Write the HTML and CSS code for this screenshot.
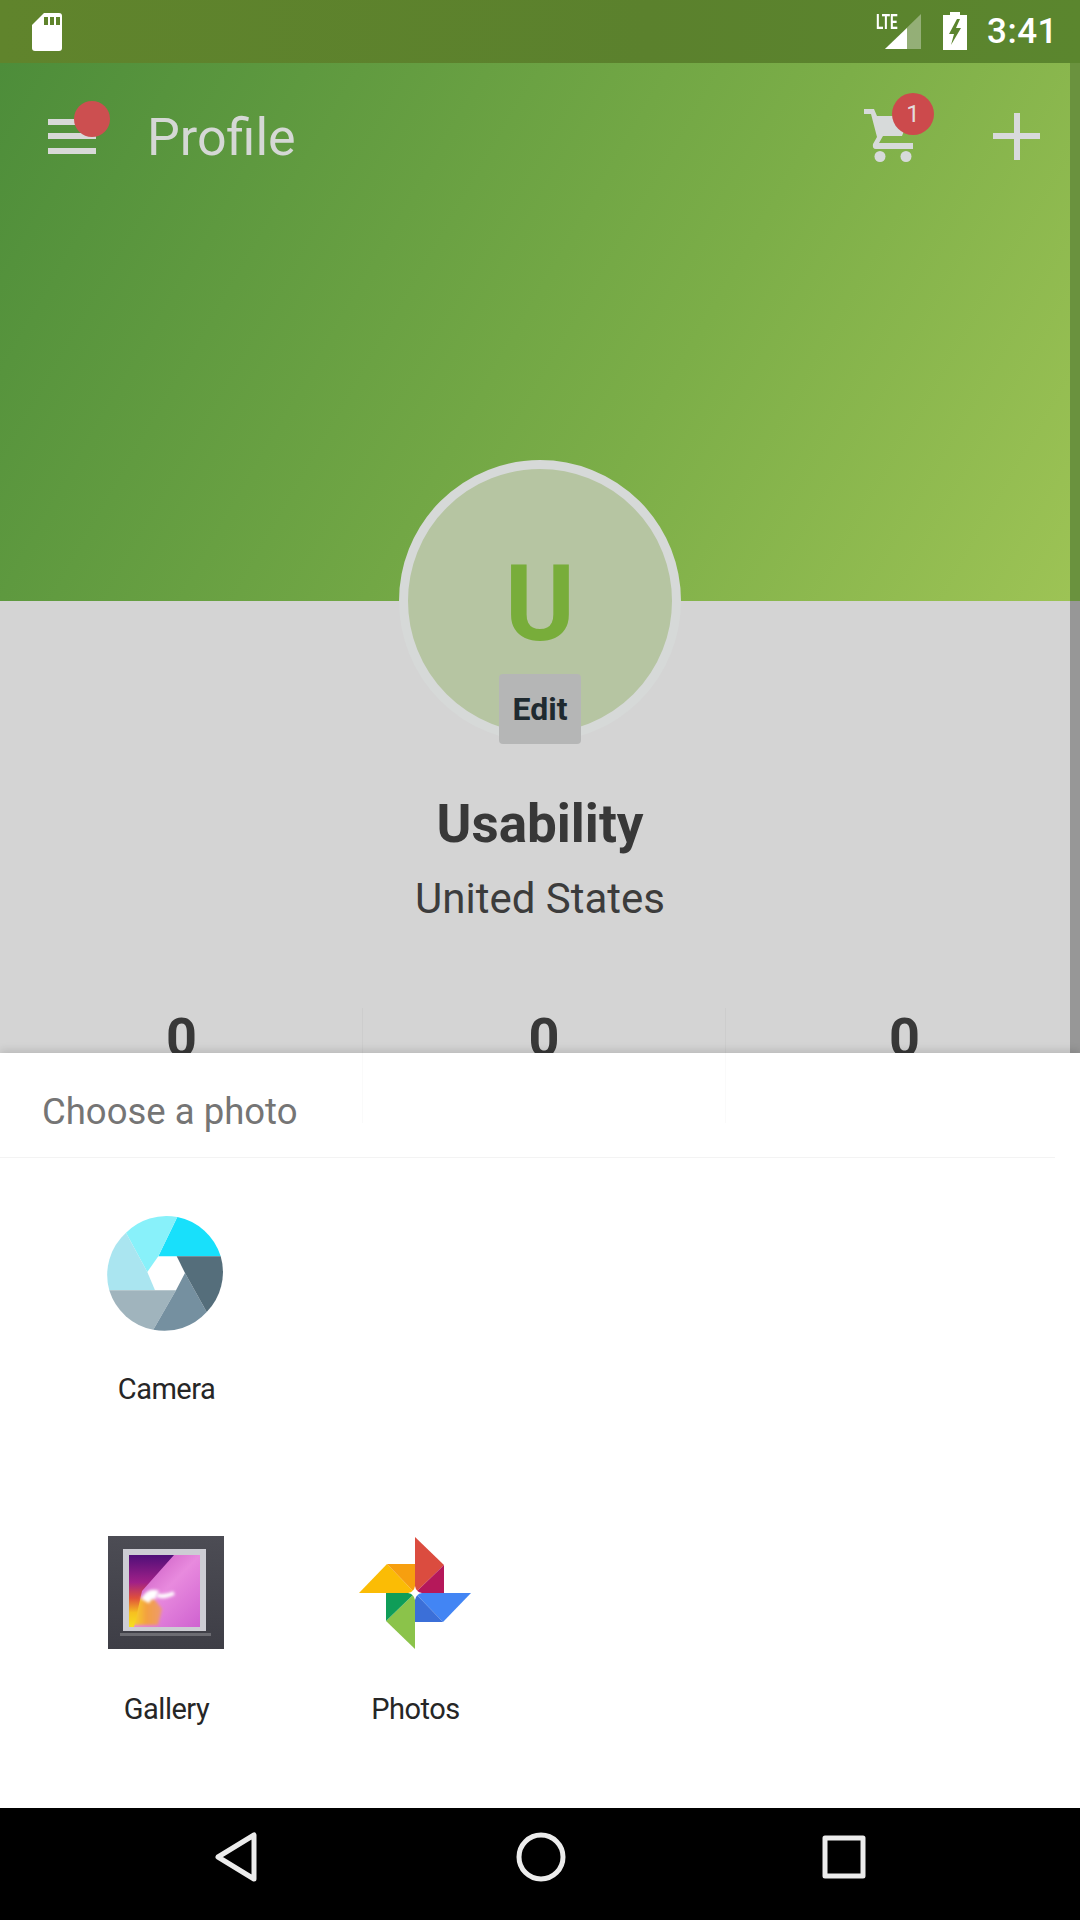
FILE: index.html
```html
<!DOCTYPE html>
<html lang="en">
<head>
  <meta charset="UTF-8" />
  <title>Profile</title>
  <link rel="stylesheet" href="styles.css">
</head>
<body>

  <div class="status-bar">
    <svg class="sd-icon" width="30" height="38" viewBox="0 0 30 38">
      <path fill="#fff" d="M12 0H27a3 3 0 0 1 3 3V35a3 3 0 0 1-3 3H3a3 3 0 0 1-3-3V12Z"/>
      <path fill="#5f832c" d="M12 4h4v8h-4zM18 4h4v8h-4zM24 4h4v8h-4z"/>
    </svg>
    <div class="status-right">
      <div class="signal">
        <span class="lte">LTE</span>
        <svg width="36" height="35" viewBox="0 0 36 35">
          <path fill="#fff" fill-opacity="0.35" d="M36 0V35H0Z"/>
          <path fill="#fff" d="M22 14V35H0Z"/>
        </svg>
      </div>
      <svg class="battery" width="24" height="38" viewBox="0 0 24 38">
        <path fill="#fff" d="M7 0H17V3H24V38H0V3H7Z"/>
        <path fill="#5b842e" d="M14 7 6 22H11L8 33 18 16H13L17 7Z"/>
      </svg>
      <span class="clock">3:41</span>
    </div>
  </div>

  <header class="hero">
    <div class="app-bar">
      <button class="menu-btn">
        <span></span><span></span><span></span>
        <i class="menu-dot"></i>
      </button>
      <h1>Profile</h1>
      <div class="cart">
        <svg width="50" height="54" viewBox="0 0 50 54">
          <path fill="#d7dada" d="M0 0H10L13 7H46L38 27H19L15 34H49V40H12Q8 40 9 35L13 28 7 5H0Z"/>
          <circle fill="#d7dada" cx="16" cy="47.5" r="5.5"/>
          <circle fill="#d7dada" cx="42" cy="47.5" r="5.5"/>
        </svg>
        <span class="cart-badge">1</span>
      </div>
      <div class="plus"></div>
    </div>
    <div class="avatar">
      <span class="avatar-letter">U</span>
      <button class="edit-btn">Edit</button>
    </div>
  </header>

  <section class="profile">
    <h2>Usability</h2>
    <p class="country">United States</p>
    <div class="stats">
      <div class="stat">0</div>
      <div class="stat">0</div>
      <div class="stat">0</div>
    </div>
  </section>

  <section class="sheet">
    <div class="sheet-title">Choose a photo</div>
    <div class="app-grid">
      <div class="app">
        <svg class="app-icon" viewBox="-57 -58 116 116">
          <path fill="#18e0fb" d="M11.3-56A57 57 0 0 1 54.7-16.7L-7.7-16.7Z"/>
          <path fill="#88f1fa" d="M-40-40.3A57 57 0 0 1 11.3-56L-7.7-16.7-18.7-1Z"/>
          <path fill="#aae5f0" d="M-56.7 17.3A57 57 0 0 1-40-40.3L-18.7-1-11 17.3Z"/>
          <path fill="#a0b4bd" d="M-12.7 56.7A57 57 0 0 1-56.7 17.3L10 17.3Z"/>
          <path fill="#7590a0" d="M40.7 39A57 57 0 0 1-12.7 56.7L10 17.3 19 0Z"/>
          <path fill="#556e7b" d="M54.7-16.7A57 57 0 0 1 40.7 39L19 0 10.7-16.7Z"/>
        </svg>
        <span>Camera</span>
      </div>
      <div class="app"></div>
      <div class="app"></div>
      <div class="app"></div>
      <div class="app">
        <svg class="app-icon" viewBox="1 0 116 116">
          <defs>
            <linearGradient id="frameFill" x1="0" y1="0" x2="0" y2="1">
              <stop offset="0" stop-color="#4c4c54"/>
              <stop offset="1" stop-color="#3e3e46"/>
            </linearGradient>
            <linearGradient id="picBase" x1="0" y1="0" x2="1" y2="1">
              <stop offset="0" stop-color="#c04ab8"/>
              <stop offset="0.5" stop-color="#e88ade"/>
              <stop offset="1" stop-color="#cf62d0"/>
            </linearGradient>
            <linearGradient id="picLeft" x1="0" y1="0" x2="0" y2="1">
              <stop offset="0" stop-color="#4f0f78"/>
              <stop offset="0.38" stop-color="#a02088"/>
              <stop offset="0.6" stop-color="#e0503a"/>
              <stop offset="0.8" stop-color="#f6c020"/>
              <stop offset="1" stop-color="#f6e020"/>
            </linearGradient>
            <linearGradient id="picWarm" x1="0" y1="0" x2="1" y2="0">
              <stop offset="0" stop-color="#f8dc20"/>
              <stop offset="0.5" stop-color="#f3a040"/>
              <stop offset="1" stop-color="#ee9a70"/>
            </linearGradient>
            <filter id="soft" filterUnits="userSpaceOnUse" x="0" y="0" width="116" height="116">
              <feGaussianBlur stdDeviation="1.8"/>
            </filter>
          </defs>
          <rect fill="url(#frameFill)" x="0" y="1" width="116" height="113"/>
          <rect fill="#cdcdd4" x="15" y="14" width="83" height="82"/>
          <rect fill="url(#picBase)" x="21" y="20" width="71" height="72"/>
          <path fill="url(#picWarm)" d="M23 62 46 64 54 74 50 90H23Z" filter="url(#soft)"/>
          <path fill="url(#picLeft)" d="M21 20H66L34 56 26 92H21Z"/>
          <path fill="none" stroke="#fff" stroke-width="9" d="M37 66Q42 57 49 60" filter="url(#soft)"/>
          <path fill="none" stroke="#fff" stroke-width="4" d="M49 60Q56 63 66 58" filter="url(#soft)"/>
          <rect fill="#6c6c72" x="12" y="98" width="91" height="3"/>
        </svg>
        <span>Gallery</span>
      </div>
      <div class="app">
        <svg class="app-icon" viewBox="-57 -58 116 116">
          <path fill="#db4c3f" d="M0-56 29-28 0 0Z"/>
          <path fill="#b5185a" d="M29-28V0H0Z"/>
          <path fill="#4285f4" d="M56 0 28 29 0 0Z"/>
          <path fill="#3b6fd8" d="M0 0 28 29H0Z"/>
          <path fill="#8bc34a" d="M0 0V56L-29 28Z"/>
          <path fill="#0f9d58" d="M0 0-29 28V0Z"/>
          <path fill="#fbbc05" d="M-56 0-28-29 0 0Z"/>
          <path fill="#f79f0f" d="M-28-29H0V0Z"/>
          <path fill="#fff" d="M0-7Q1-1 7 0 1 1 0 7-1 1-7 0-1-1 0-7Z"/>
        </svg>
        <span>Photos</span>
      </div>
    </div>
  </section>

  <nav class="nav-bar">
    <svg width="46" height="52" viewBox="0 0 46 52">
      <path fill="none" stroke="#ececec" stroke-width="5" stroke-linejoin="round" d="M40 4V48L4 26Z"/>
    </svg>
    <svg width="50" height="50" viewBox="0 0 50 50">
      <circle fill="none" stroke="#ececec" stroke-width="5" cx="25" cy="25" r="22"/>
    </svg>
    <svg width="44" height="44" viewBox="0 0 44 44">
      <rect fill="none" stroke="#ececec" stroke-width="5" stroke-linejoin="round" x="3" y="3" width="38" height="38"/>
    </svg>
  </nav>

</body>
</html>
```

FILE: styles.css
```css
* {
  box-sizing: border-box;
}

body {
  margin: 0;
  width: 1080px;
  height: 1920px;
  overflow: hidden;
  font-family: 'Roboto', sans-serif;
  background-color: #fff;
  display: flex;
  flex-direction: column;
}

h1, h2, p {
  margin: 0;
}

button {
  border: none;
  padding: 0;
  background: none;
  font-family: inherit;
}

/* status bar */
.status-bar {
  height: 63px;
  flex: none;
  background: linear-gradient(90deg, #60842c, #5b812d 60%, #5b862e);
  display: flex;
  justify-content: space-between;
  align-items: flex-start;
  padding: 13px 22px 0 32px;
}

.status-right {
  display: flex;
  align-items: flex-start;
}

.signal {
  position: relative;
  margin-right: 22px;
  margin-top: 1px;
}

.lte {
  position: absolute;
  left: -9px;
  top: -4px;
  font-size: 21px;
  font-weight: 700;
  color: #fff;
  transform: scaleX(0.64);
  transform-origin: left top;
}

.battery {
  margin-top: -1px;
  margin-right: 20px;
}

.clock {
  color: #fff;
  font-size: 35px;
  font-weight: 500;
  line-height: 26px;
  letter-spacing: 0.5px;
  margin-top: 6px;
}

/* green header */
.hero {
  position: relative;
  height: 538px;
  flex: none;
  background: linear-gradient(120deg, #4d8d3a 0%, #7cae48 62%, #9dc355 100%);
  border-right: 10px solid #6a923e;
}

.app-bar {
  display: flex;
  align-items: center;
  height: 146px;
  padding-left: 48px;
}

.app-bar h1 {
  font-size: 52px;
  font-weight: 400;
  color: #d5d8d5;
  margin-left: 51px;
  padding-top: 3px;
}

.menu-btn {
  position: relative;
  width: 48px;
  height: 35px;
  display: flex;
  flex-direction: column;
  justify-content: space-between;
}

.menu-btn span {
  display: block;
  height: 6px;
  background-color: #d8d9d8;
}

.menu-dot {
  position: absolute;
  left: 26px;
  top: -18px;
  width: 36px;
  height: 36px;
  border-radius: 50%;
  background-color: #cc4f50;
}

.cart {
  position: relative;
  margin-left: auto;
  margin-right: 79px;
  height: 54px;
}

.cart-badge {
  position: absolute;
  left: 28px;
  top: -16px;
  width: 42px;
  height: 42px;
  border-radius: 50%;
  background-color: #cc4a4c;
  color: #e4dcdc;
  font-size: 24px;
  line-height: 42px;
  text-align: center;
}

.plus {
  width: 47px;
  height: 47px;
  margin-right: 30px;
  background:
    linear-gradient(#d8dadc, #d8dadc) center / 100% 6px no-repeat,
    linear-gradient(#d8dadc, #d8dadc) center / 6px 100% no-repeat;
}

/* avatar hangs over the header edge */
.avatar {
  position: absolute;
  left: 399px;
  top: 397px;
  width: 282px;
  height: 282px;
  border-radius: 50%;
  border: 9px solid #d6d9d8;
  background-color: #b6c5a2;
  display: flex;
  justify-content: center;
  z-index: 1;
}

.avatar-letter {
  font-size: 106px;
  font-weight: 700;
  color: #78ad3a;
  line-height: 124px;
  margin-top: 73px;
}

.edit-btn {
  position: absolute;
  left: 91px;
  top: 205px;
  width: 82px;
  height: 70px;
  background-color: #b5b6b6;
  border-radius: 4px;
  color: #1f2a30;
  font-size: 32px;
  font-weight: 700;
}

/* dimmed profile content */
.profile {
  height: 452px;
  flex: none;
  overflow: hidden;
  background-color: #d4d4d4;
  border-right: 10px solid #979797;
  padding: 193px 0 0 10px;
  text-align: center;
}

.profile h2 {
  font-size: 53px;
  font-weight: 700;
  color: #383838;
  line-height: 60px;
}

.country {
  font-size: 42px;
  color: #3c3c3c;
  line-height: 50px;
  margin-top: 20px;
}

.stats {
  display: grid;
  grid-template-columns: 362px 363px 355px;
  margin: 84px 0 0 -9px;
  height: 80px;
}

.stat {
  font-size: 54px;
  font-weight: 700;
  color: #383838;
  line-height: 60px;
  border-right: 1px solid #cdcdcd;
}

.stat:last-child {
  border-right: none;
  padding-left: 2px;
}

/* chooser sheet */
.sheet {
  height: 755px;
  flex: none;
  background-color: #fff;
  box-shadow: 0 -3px 8px rgba(0, 0, 0, 0.12);
  z-index: 1;
}

.sheet-title {
  position: relative;
  height: 105px;
  padding-left: 42px;
  line-height: 118px;
  font-size: 36.5px;
  color: #757575;
  background:
    linear-gradient(#fafafa, #fafafa) 362px 0 / 1px 70px no-repeat,
    linear-gradient(#fafafa, #fafafa) 725px 0 / 1px 70px no-repeat;
}

.sheet-title::after {
  content: "";
  position: absolute;
  left: 0;
  right: 25px;
  bottom: 0;
  height: 1px;
  background-color: #f3f3f3;
}

.app-grid {
  display: grid;
  grid-template-columns: repeat(4, 249px);
  grid-template-rows: 320px 270px;
  padding: 57px 0 0 42px;
}

.app {
  display: flex;
  flex-direction: column;
  align-items: center;
}

.app span {
  font-size: 29px;
  letter-spacing: -0.5px;
  color: #262626;
  margin-top: 40px;
  line-height: 36px;
}

.app-icon {
  width: 116px;
  height: 116px;
  display: block;
  overflow: visible;
}

/* android nav bar */
.nav-bar {
  height: 112px;
  flex: none;
  background-color: #000;
  display: grid;
  grid-template-columns: 46px 50px 44px;
  justify-content: space-between;
  align-items: center;
  padding: 0 214px 14px;
}
```
